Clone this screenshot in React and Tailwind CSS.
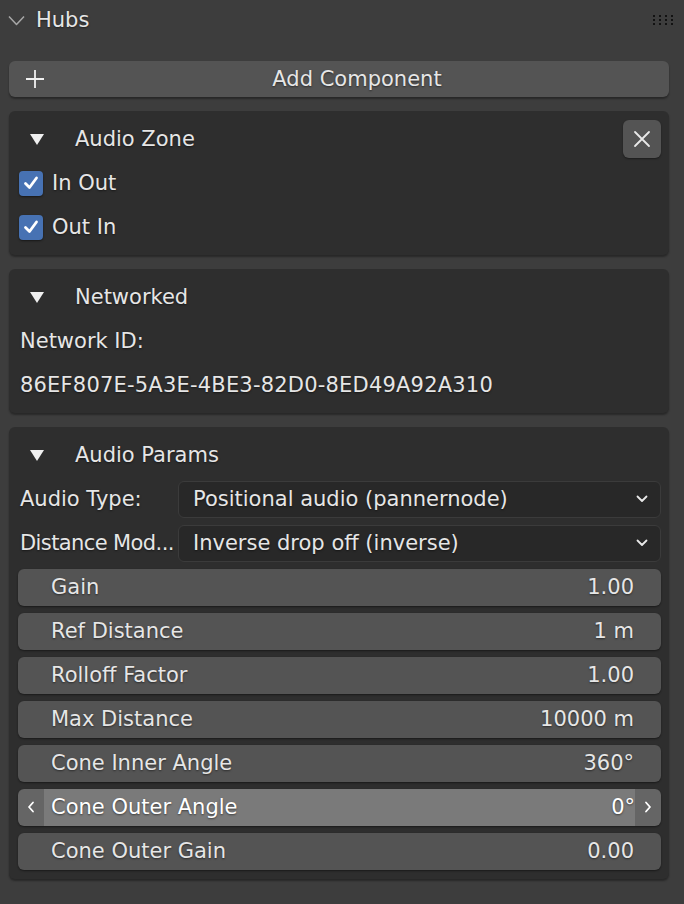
import React from "react";

const shadow = "[text-shadow:0_1px_2px_rgba(0,0,0,0.5)]";

const Triangle = () => (
  <svg width="16" height="13" viewBox="0 0 16 13" className="shrink-0">
    <path d="M1 1 H15 L8 12 Z" fill="#f0f0f0" />
  </svg>
);

const Check = () => (
  <div className="w-[24px] h-[25px] rounded-[4px] bg-[#4772b3] flex items-center justify-center shadow-[0_1px_2px_rgba(0,0,0,0.5)]">
    <svg width="16" height="16" viewBox="0 0 16 16">
      <path d="M2.5 8.5 L6.5 12.5 L13.5 3" fill="none" stroke="#ffffff" strokeWidth="2.8" strokeLinecap="round" strokeLinejoin="round" />
    </svg>
  </div>
);

const PanelTitle = ({ title, closable }) => (
  <div className="h-[44px] flex items-center">
    <div className="w-[57px] pl-[11px] flex items-center">
      <Triangle />
    </div>
    <span className={`flex-1 ${shadow}`}>{title}</span>
    {closable && (
      <button className="w-[38px] h-[38px] rounded-[6px] bg-[#545454] flex items-center justify-center shadow-[0_1px_2px_rgba(0,0,0,0.4)]">
        <svg width="20" height="20" viewBox="0 0 20 20">
          <path d="M3 3 L17 17 M17 3 L3 17" stroke="#e8e8e8" strokeWidth="1.8" strokeLinecap="round" />
        </svg>
      </button>
    )}
  </div>
);

const Dropdown = ({ label, value, tight }) => (
  <div className="h-[44px] flex items-center">
    <span className={`w-[160px] shrink-0 pl-[2px] whitespace-nowrap ${tight ? "tracking-[-0.6px]" : ""} ${shadow}`}>{label}</span>
    <div className="flex-1 h-[37px] rounded-[6px] bg-[#282828] border border-[#3b3b3b] flex items-center pl-[14px] pr-[12px]">
      <span className={`flex-1 ${shadow}`}>{value}</span>
      <svg width="12" height="8" viewBox="0 0 12 8">
        <path d="M1.5 1.5 L6 6 L10.5 1.5" fill="none" stroke="#e8e8e8" strokeWidth="1.8" strokeLinecap="round" strokeLinejoin="round" />
      </svg>
    </div>
  </div>
);

const Field = ({ label, value, active }) => (
  <div className="h-[44px] flex items-center">
    {active ? (
      <div className="w-full h-[37px] rounded-[6px] bg-[#656565] flex items-stretch overflow-hidden shadow-[0_1px_2px_rgba(0,0,0,0.45)]">
        <div className="w-[26px] flex items-center justify-center">
          <svg width="8" height="12" viewBox="0 0 8 12">
            <path d="M6 1.5 L2 6 L6 10.5" fill="none" stroke="#ffffff" strokeWidth="1.8" strokeLinecap="round" strokeLinejoin="round" />
          </svg>
        </div>
        <div className="flex-1 bg-[#7a7a7a] flex items-center pl-[7px]">
          <span className={`flex-1 text-white ${shadow}`}>{label}</span>
          <span className={`text-white ${shadow}`}>{value}</span>
        </div>
        <div className="w-[26px] flex items-center justify-center">
          <svg width="8" height="12" viewBox="0 0 8 12">
            <path d="M2 1.5 L6 6 L2 10.5" fill="none" stroke="#ffffff" strokeWidth="1.8" strokeLinecap="round" strokeLinejoin="round" />
          </svg>
        </div>
      </div>
    ) : (
      <div className="w-full h-[37px] rounded-[6px] bg-[#545454] flex items-center pl-[33px] pr-[27px] shadow-[0_1px_2px_rgba(0,0,0,0.45)]">
        <span className={`flex-1 ${shadow}`}>{label}</span>
        <span className={shadow}>{value}</span>
      </div>
    )}
  </div>
);

const Panel = ({ children }) => (
  <div className="rounded-[6px] bg-[#2e2e2e] pt-[6px] pb-[6px] pl-[9px] pr-[8px] shadow-[0_2px_2px_rgba(0,0,0,0.35)]">
    {children}
  </div>
);

const fields = [
  ["Gain", "1.00"],
  ["Ref Distance", "1 m"],
  ["Rolloff Factor", "1.00"],
  ["Max Distance", "10000 m"],
  ["Cone Inner Angle", "360°"],
  ["Cone Outer Angle", "0°", true],
  ["Cone Outer Gain", "0.00"],
];

export default function App() {
  return (
    <div className="w-[684px] h-[904px] overflow-hidden bg-[#3d3d3d] text-[#e6e6e6] text-[21px] leading-none font-['DejaVu_Sans',sans-serif]">
      <div className="h-[40px] flex items-center pl-[8px] pr-[11px]">
        <svg width="17" height="11" viewBox="0 0 17 11" className="mr-[11px]">
          <path d="M1 1.5 L8.5 9.5 L16 1.5" fill="none" stroke="#a8a8a8" strokeWidth="1.5" strokeLinejoin="round" />
        </svg>
        <span className={`flex-1 ${shadow}`}>Hubs</span>
        <div className="grid grid-cols-4 gap-x-[4px] gap-y-[2px]">
          {Array.from({ length: 12 }).map((_, i) => (
            <div key={i} className="w-[2px] h-[2px] bg-[#121212]" />
          ))}
        </div>
      </div>

      <div className="pt-[21px] pl-[9px] pr-[15px] flex flex-col gap-[14px]">
        <button className="h-[36px] rounded-[6px] bg-[#545454] flex items-center text-[#e6e6e6] shadow-[0_2px_2px_rgba(0,0,0,0.35)]">
          <div className="w-[36px] flex items-center justify-end">
            <svg width="20" height="20" viewBox="0 0 20 20">
              <path d="M10 1 V19 M1 10 H19" stroke="#f0f0f0" strokeWidth="1.8" />
            </svg>
          </div>
          <span className={`flex-1 text-center ${shadow}`}>Add Component</span>
        </button>

        <Panel>
          <PanelTitle title="Audio Zone" closable />
          <div className="h-[44px] flex items-center gap-[9px] pl-[1px]">
            <Check />
            <span className={shadow}>In Out</span>
          </div>
          <div className="h-[44px] flex items-center gap-[9px] pl-[1px]">
            <Check />
            <span className={shadow}>Out In</span>
          </div>
        </Panel>

        <Panel>
          <PanelTitle title="Networked" />
          <div className="h-[44px] flex items-center pl-[2px]">
            <span className={shadow}>Network ID:</span>
          </div>
          <div className="h-[44px] flex items-center pl-[2px]">
            <span className={`tracking-[0.2px] ${shadow}`}>86EF807E-5A3E-4BE3-82D0-8ED49A92A310</span>
          </div>
        </Panel>

        <Panel>
          <PanelTitle title="Audio Params" />
          <Dropdown label="Audio Type:" value="Positional audio (pannernode)" />
          <Dropdown label="Distance Mod..." value="Inverse drop off (inverse)" tight />
          {fields.map(([label, value, active]) => (
            <Field key={label} label={label} value={value} active={active} />
          ))}
        </Panel>
      </div>
    </div>
  );
}
